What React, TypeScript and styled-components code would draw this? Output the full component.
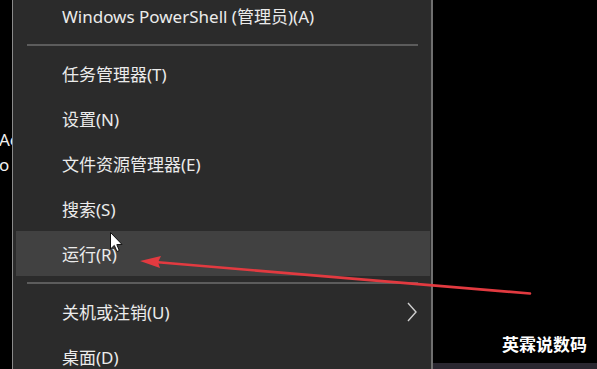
import { createGlobalStyle, styled } from 'styled-components'

const GlobalStyle = createGlobalStyle`
  html, body {
    margin: 0;
    padding: 0;
    background: #000;
    overflow: hidden;
  }
  body {
    font-family: "Noto Sans", "Noto Sans CJK SC", sans-serif;
  }
`

type Item = { label: string; highlight?: boolean; submenu?: boolean }

const topItems: Item[] = [{ label: 'Windows PowerShell (管理员)(A)' }]
const midItems: Item[] = [
  { label: '任务管理器(T)' },
  { label: '设置(N)' },
  { label: '文件资源管理器(E)' },
  { label: '搜索(S)' },
  { label: '运行(R)', highlight: true },
]
const bottomItems: Item[] = [
  { label: '关机或注销(U)', submenu: true },
  { label: '桌面(D)' },
]

function Chevron() {
  return (
    <svg width="10" height="20" viewBox="0 0 10 20">
      <path d="M1 1 L9 10 L1 19" fill="none" stroke="#cfcfcf" strokeWidth="1.4" />
    </svg>
  )
}

function MenuRow({ item }: { item: Item }) {
  return (
    <Row highlight={item.highlight ? 1 : 0}>
      <Label>{item.label}</Label>
      {item.submenu && <Chevron />}
    </Row>
  )
}

function App() {
  return (
    <>
      <GlobalStyle />
      <Screen>
        <LeftStrip>
          <PeekText>Ac</PeekText>
          <PeekText>o</PeekText>
        </LeftStrip>
        <Menu>
          {topItems.map((it) => (
            <MenuRow key={it.label} item={it} />
          ))}
          <Separator />
          {midItems.map((it) => (
            <MenuRow key={it.label} item={it} />
          ))}
          <Separator />
          {bottomItems.map((it) => (
            <MenuRow key={it.label} item={it} />
          ))}
        </Menu>
        <Desktop>
          <Watermark>英霖说数码</Watermark>
          <Taskbar />
        </Desktop>
        <Annotation width="597" height="369" viewBox="0 0 597 369">
          <path d="M158 262.3 L530 293.5" stroke="#e23a40" strokeWidth="2.6" strokeLinecap="round" />
          <path d="M140 261 L161 256 L158 262.3 L160 268 Z" fill="#e23a40" />
          <path
            d="M110.5 232.5 L110.5 249 L114.3 245.4 L117 251.5 L119.3 250.5 L116.8 244.6 L122 244.4 Z"
            fill="#fff"
            stroke="#111"
            strokeWidth="1"
            strokeLinejoin="round"
          />
        </Annotation>
      </Screen>
    </>
  )
}

export default App

const Screen = styled.div`
  position: relative;
  display: flex;
  width: 597px;
  height: 369px;
  overflow: hidden;
  background: #000;
`

const LeftStrip = styled.div`
  width: 12px;
  flex: none;
  overflow: hidden;
  display: flex;
  flex-direction: column;
  padding-top: 130px;
  gap: 5px;
  box-sizing: border-box;
`

const PeekText = styled.div`
  color: #f0f0f0;
  font-size: 17px;
  line-height: 20px;
  white-space: nowrap;
  margin-left: -1px;
`

const Menu = styled.div`
  width: 421px;
  flex: none;
  box-sizing: border-box;
  margin-top: -7px;
  height: 390px;
  background: #2b2b2b;
  border-left: 1px solid #8a8a8a;
  border-right: 2px solid #6f6f6f;
  padding: 0 1px 0 3px;
  display: flex;
  flex-direction: column;
`

const Row = styled.div<{ highlight: number }>`
  height: 45px;
  flex: none;
  display: flex;
  align-items: center;
  justify-content: space-between;
  padding: 0 13px 0 46px;
  background: ${(p) => (p.highlight ? '#414141' : 'transparent')};
`

const Label = styled.span`
  color: #ebebeb;
  font-size: 17px;
  white-space: nowrap;
`

const Separator = styled.div`
  height: 13px;
  flex: none;
  display: flex;
  align-items: center;
  padding: 0 12px 0 11px;

  &::after {
    content: '';
    flex: 1;
    height: 2px;
    margin-top: 1px;
    background: #5c5c5c;
  }
`

const Desktop = styled.div`
  flex: 1;
  display: flex;
  flex-direction: column;
  justify-content: flex-end;
  align-items: flex-end;
`

const Watermark = styled.div`
  color: #fff;
  font-family: "Noto Sans CJK SC", sans-serif;
  font-weight: 700;
  font-size: 17px;
  line-height: 20px;
  padding-right: 10px;
  margin-bottom: 9px;
  text-shadow: 0 0 2px #000;
`

const Taskbar = styled.div`
  align-self: stretch;
  height: 6px;
  background: #2a2730;
`

const Annotation = styled.svg`
  position: absolute;
  left: 0;
  top: 0;
  pointer-events: none;
`
